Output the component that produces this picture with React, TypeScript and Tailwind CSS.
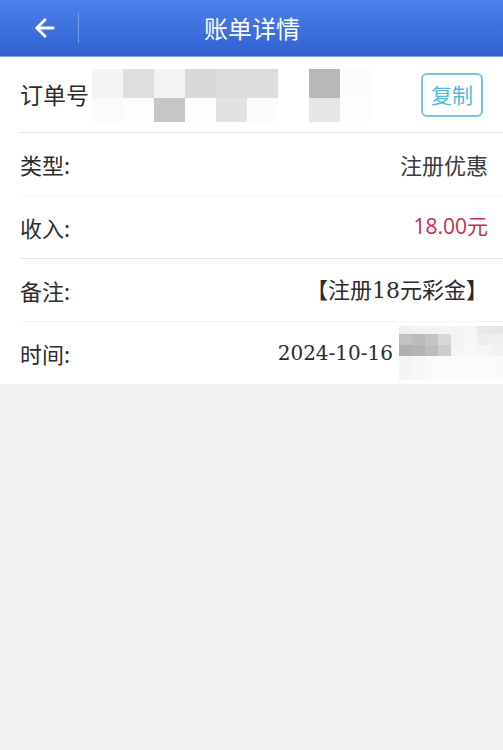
import { ArrowLeft } from "lucide-react";

const cjk = "font-['Noto_Sans_CJK_SC','Noto_Sans',sans-serif]";
const serif = "font-['DejaVu_Serif','Noto_Sans_CJK_SC',serif]";

const orderBlocks = [
  ["#f4f4f4", "#fbfbfb"],
  ["#dedede", "#fdfdfd"],
  ["#f3f3f3", "#c6c6c6"],
  ["#d8d8d8", "#fdfdfd"],
  ["#dcdcdc", "#e2e2e2"],
  ["#dcdcdc", "#fcfcfc"],
  ["#ffffff", "#ffffff"],
  ["#b8b8b8", "#e6e6e6"],
  ["#fcfcfc", "#fdfdfd"],
];

const timeBlocks = [
  ["#f0f0f0", "#c2c2c2", "#b0b0b0", "#f5f5f5"],
  ["#f2f2f2", "#bcbcbc", "#b4b4b4", "#f7f7f7"],
  ["#f3f3f3", "#c4c4c4", "#bdbdbd", "#fafafa"],
  ["#f5f5f5", "#d8d8d8", "#cdcdcd", "#fbfbfb"],
  ["#f3f3f3", "#f3f3f3", "#f5f5f5", "#fbfbfb"],
  ["#f6f6f6", "#f6f6f6", "#f8f8f8", "#fcfcfc"],
  ["#e8e8e8", "#eeeeee", "#f6f6f6", "#fbfbfb"],
  ["#e6e6e6", "#efefef", "#f3f3f3", "#fafafa"],
];

function Mosaic({ cols, cellW, rowHs }: { cols: string[][]; cellW: number; rowHs: number[] }) {
  return (
    <div className="flex">
      {cols.map((col, i) => (
        <div key={i} className="flex flex-col">
          {col.map((c, j) => (
            <div key={j} style={{ backgroundColor: c, width: cellW, height: rowHs[j] }} />
          ))}
        </div>
      ))}
    </div>
  );
}

function Row({
  label,
  children,
  line,
}: {
  label: string;
  children: React.ReactNode;
  line: string;
}) {
  return (
    <div className="pl-5">
      <div className={`flex h-[63px] items-center justify-between border-b pr-[15px] ${line}`}>
        <span className={`text-[22px] text-[#2c2c2c] ${cjk}`}>{label}</span>
        {children}
      </div>
    </div>
  );
}

export default function App() {
  return (
    <div className="min-h-[750px] bg-[#f2f2f3]">
      <header className="flex h-[57px] items-center border-b border-[#7fa2ee] bg-gradient-to-b from-[#4b81ea] to-[#3260d2] text-white">
        <div className="flex w-[78px] justify-center pl-[18px] pr-[6px]">
          <ArrowLeft className="h-[28px] w-[28px]" strokeWidth={2.4} />
        </div>
        <div className="h-[30px] w-px bg-white/30" />
        <h1 className={`flex-1 pr-[78px] text-center text-[24px] font-normal ${cjk}`}>账单详情</h1>
      </header>

      <div className="bg-white">
        <div className="pl-5">
          <div className="flex h-[76px] items-center justify-between border-b border-[#e6e6e6] pr-5">
            <div className="flex items-center">
              <span className={`text-[23px] text-[#2c2c2c] ${cjk}`}>订单号</span>
              <div className="ml-[3px] mt-[2px]">
                <Mosaic cols={orderBlocks} cellW={31} rowHs={[29, 24]} />
              </div>
            </div>
            <button
              type="button"
              className={`flex h-[44px] w-[62px] items-center justify-center rounded-[6px] border-2 border-[#74c6dd] text-[21px] text-[#55b9d6] ${cjk}`}
            >
              复制
            </button>
          </div>
        </div>

        <Row label="类型:" line="border-[#f7f7f7]">
          <span className={`text-[22px] text-[#3a3a3a] ${cjk}`}>注册优惠</span>
        </Row>
        <Row label="收入:" line="border-[#e6e6e6]">
          <span className={`text-[21px] text-[#c1314d] font-['Open_Sans','Noto_Sans_CJK_SC',sans-serif]`}>
            18.00元
          </span>
        </Row>
        <Row label="备注:" line="border-[#f4f4f4]">
          <span className={`text-[22px] text-[#2c2c2c] ${serif}`}>【注册18元彩金】</span>
        </Row>
        <div className="pl-5">
          <div className="flex h-[62px] items-center justify-between">
            <span className={`text-[22px] text-[#2c2c2c] ${cjk}`}>时间:</span>
            <div className="flex items-center">
              <span className={`text-[20px] text-[#2c2c2c] ${serif}`}>2024-10-16</span>
              <div className="ml-[6px]">
                <Mosaic cols={timeBlocks} cellW={13} rowHs={[8, 11, 11, 24]} />
              </div>
            </div>
          </div>
        </div>
      </div>
    </div>
  );
}
